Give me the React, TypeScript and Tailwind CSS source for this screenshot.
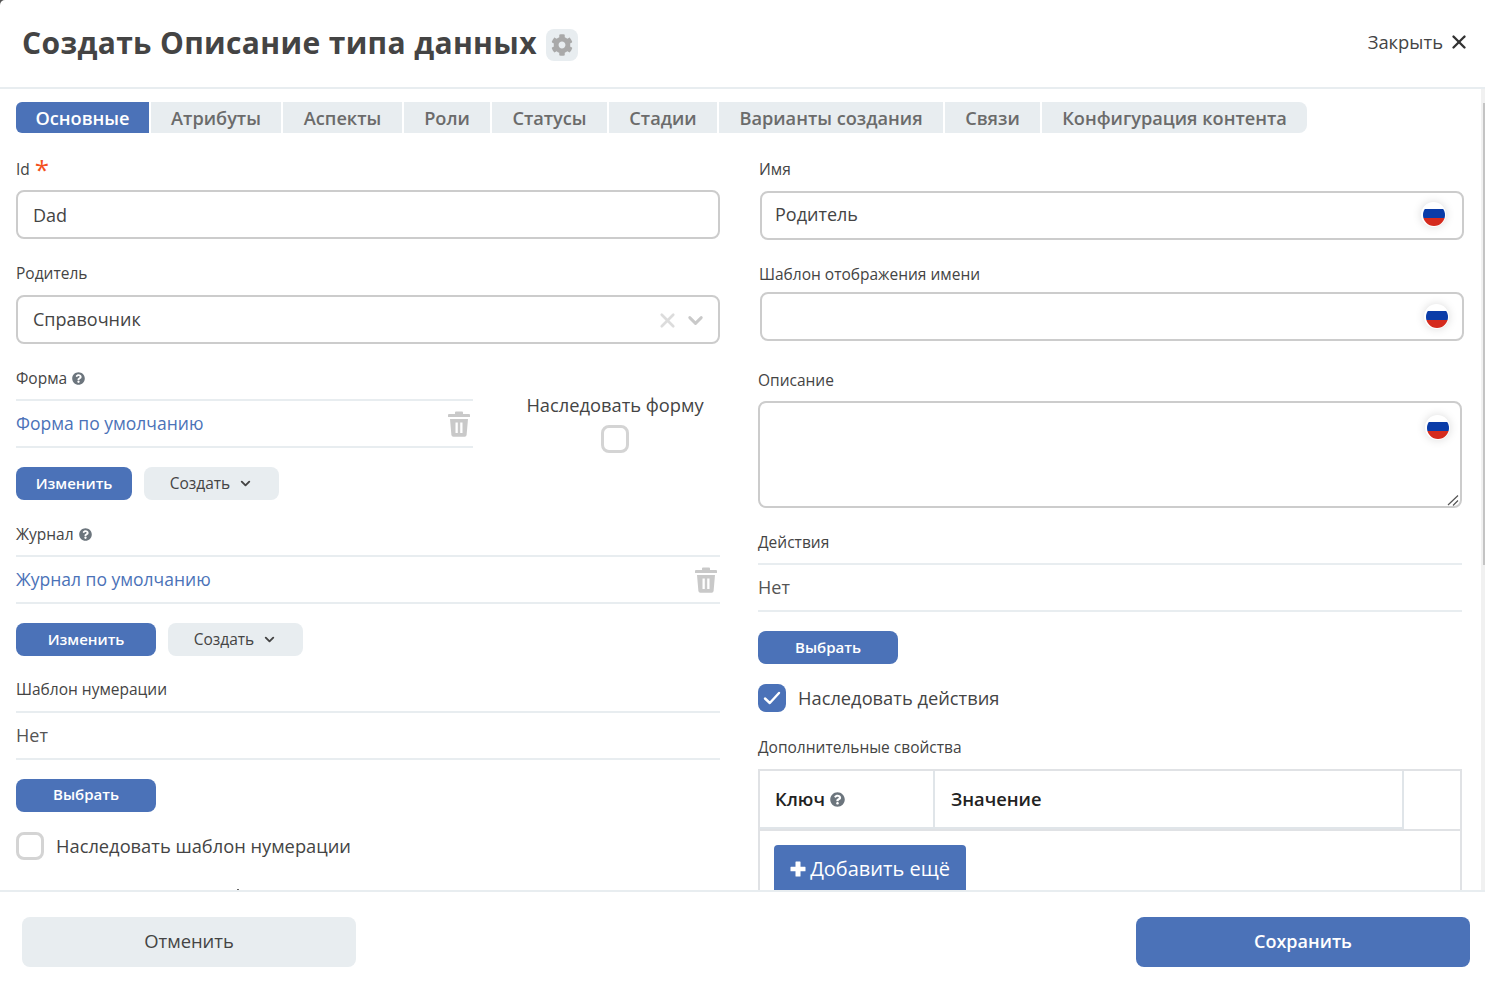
import { ChevronDown, X } from "lucide-react";
import { FaCog, FaQuestionCircle } from "react-icons/fa";

const tabs = [
  { title: "Основные", width: "w-[133px]" },
  { title: "Атрибуты", width: "w-[130px]" },
  { title: "Аспекты", width: "w-[119px]" },
  { title: "Роли", width: "w-[86px]" },
  { title: "Статусы", width: "w-[115px]" },
  { title: "Стадии", width: "w-[108px]" },
  { title: "Варианты создания", width: "w-[224px]" },
  { title: "Связи", width: "w-[95px]" },
  { title: "Конфигурация контента", width: "w-[265px]" },
];

function Label({ children, className = "" }: { children: React.ReactNode; className?: string }) {
  return (
    <div className={`flex items-center h-5 text-[15.5px] leading-5 text-[#444] ${className}`}>
      {children}
    </div>
  );
}

function Help({ size = 13 }: { size?: number }) {
  return <FaQuestionCircle size={size} className="ml-[5px] text-[#6c757d]" />;
}

function Trash() {
  return (
    <svg width="22" height="26" viewBox="0 0 22 26" className="mr-[3px] text-[#c9c9c9]" fill="currentColor">
      <path d="M8 0.5h6a1 1 0 0 1 1 1V3h6a1 1 0 0 1 1 1v1.5a.5.5 0 0 1-.5.5H.5a.5.5 0 0 1-.5-.5V4a1 1 0 0 1 1-1h6V1.5a1 1 0 0 1 1-1z" />
      <path
        fillRule="evenodd"
        d="M2 8h18l-1.4 16a2 2 0 0 1-2 1.8H5.4a2 2 0 0 1-2-1.8L2 8zm5.5 3.5v10.5h2.3V11.5H7.5zm4.7 0v10.5h2.3V11.5h-2.3z"
      />
    </svg>
  );
}

function Flag({ className = "" }: { className?: string }) {
  return (
    <span
      className={`absolute flex items-center justify-center w-[25px] h-[25px] rounded-full bg-white shadow-[0_0_10px_rgba(0,0,0,0.15)] ${className}`}
    >
      <svg width="22" height="22" viewBox="0 0 22 22">
        <clipPath id="flag">
          <circle cx="11" cy="11" r="11" />
        </clipPath>
        <g clipPath="url(#flag)">
          <rect width="22" height="5" y="0" fill="#fff" />
          <rect width="22" height="9" y="5" fill="#0a3ca8" />
          <rect width="22" height="8" y="14" fill="#d52b1e" />
        </g>
      </svg>
    </span>
  );
}

function TextField({ value = "", className = "", flagClass = "" }: { value?: string; className?: string; flagClass?: string }) {
  return (
    <div className={`relative h-[49px] rounded-lg border-2 border-[#ccc] flex items-center pl-[13px] text-lg text-[#444] ${className}`}>
      <span className="-mt-[4px]">{value}</span>
      <Flag className={flagClass} />
    </div>
  );
}

function LinkRow({ text, className = "", link = false, trash = false }: { text: string; className?: string; link?: boolean; trash?: boolean }) {
  return (
    <div
      className={`flex items-center justify-between h-[49px] border-y-2 border-[#e8edf0] ${link ? "text-[17.5px] text-[#4b72b8]" : "text-lg text-[#555] pb-[2px]"} ${className}`}
    >
      <span>{text}</span>
      {trash && <Trash />}
    </div>
  );
}

function PrimaryButton({ children, className = "" }: { children: React.ReactNode; className?: string }) {
  return (
    <button className={`h-[33px] rounded-lg bg-[#4b72b8] text-white text-[15px] font-semibold ${className}`}>
      {children}
    </button>
  );
}

function CreateButton() {
  return (
    <button className="flex items-center justify-center gap-2 w-[135px] h-[33px] rounded-lg bg-[#e8edf0] text-[15.5px] text-[#444]">
      Создать
      <ChevronDown size={15} strokeWidth={3} />
    </button>
  );
}

function Checkbox({ checked = false }: { checked?: boolean }) {
  if (checked) {
    return (
      <span className="flex items-center justify-center w-7 h-7 rounded-lg bg-[#4b72b8]">
        <svg width="18" height="14" viewBox="0 0 18 14" fill="none">
          <path d="M2 7.5 L6.8 12 L16 2" stroke="#fff" strokeWidth="2.4" strokeLinecap="round" strokeLinejoin="round" />
        </svg>
      </span>
    );
  }
  return <span className="block w-7 h-7 rounded-lg border-[3px] border-[#d4d4d4] bg-white" />;
}

export default function App() {
  return (
    <div className="h-[998px] w-[1485px] overflow-hidden bg-[#555]">
      <div className="relative flex flex-col h-full overflow-hidden rounded-tl-[5px] bg-white text-[#444] font-['Open_Sans','Noto_Sans',sans-serif]">
        {/* Header */}
        <header className="flex items-center justify-between shrink-0 h-[89px] pl-[22px] pr-[15px] border-b-2 border-[#e8edf0]">
          <div className="flex items-center">
            <h1 className="text-[30px] font-bold tracking-[0.35px] text-[#444] -mt-[2px]">Создать Описание типа данных</h1>
            <span className="flex items-center justify-center ml-[9px] mt-[2px] w-8 h-8 rounded-lg bg-[#e8edf0]">
              <FaCog size={22} className="text-[#a9a9a9]" />
            </span>
          </div>
          <div className="flex items-center gap-[5px] text-[18.4px] text-[#444] -mt-[3px]">
            Закрыть
            <X size={22} strokeWidth={2.6} className="text-[#333]" />
          </div>
        </header>

        {/* Form */}
        <main className="flex-1 min-h-0 overflow-hidden pt-[13px] pl-4">
          <nav className="flex gap-[2px]">
            {tabs.map((tab, idx) => (
              <div
                key={tab.title}
                className={`flex items-center justify-center h-[31px] pt-[2px] text-[18.2px] font-semibold ${tab.width} ${
                  idx === 0 ? "bg-[#4b72b8] text-white rounded-l-md" : "bg-[#e8edf0] text-[#6b6b6b]"
                } ${idx === tabs.length - 1 ? "rounded-r-lg" : ""}`}
              >
                {tab.title}
              </div>
            ))}
          </nav>

          <div className="grid grid-cols-[704px_704px] gap-x-[38px] mt-[26px]">
            {/* Left column */}
            <div className="flex flex-col items-stretch">
              <Label>
                Id
                <span className="ml-[5px] text-[26px] leading-5 text-[#f4511e]">*</span>
              </Label>
              <div className="mt-[11px] h-[49px] rounded-lg border-2 border-[#ccc] flex items-center pl-[15px] text-lg text-[#444]">Dad</div>

              <Label className="mt-6">Родитель</Label>
              <div className="mt-3 h-[49px] rounded-lg border-2 border-[#ccc] flex items-center pl-[15px] pr-[11px] text-lg text-[#444]">
                <span className="flex-1 -mt-[2px]">Справочник</span>
                <X size={23} strokeWidth={2.8} className="mt-[2px] text-[#dcdcdc] mr-[5px]" />
                <ChevronDown size={23} strokeWidth={3} className="mt-[2px] text-[#c9c9c9]" />
              </div>

              <div className="flex mt-6">
                <div className="w-[457px]">
                  <Label>
                    Форма
                    <Help />
                  </Label>
                  <LinkRow text="Форма по умолчанию" link trash className="mt-[11px]" />
                  <div className="flex gap-3 mt-[19px]">
                    <PrimaryButton className="w-[116px]">Изменить</PrimaryButton>
                    <CreateButton />
                  </div>
                </div>
                <div className="flex-1 ml-[37px] flex flex-col items-center pt-[25px]">
                  <span className="text-[18.3px] leading-[24px] text-[#444]">Наследовать форму</span>
                  <span className="mt-2">
                    <Checkbox />
                  </span>
                </div>
              </div>

              <Label className="mt-6">
                Журнал
                <Help />
              </Label>
              <LinkRow text="Журнал по умолчанию" link trash className="mt-[11px]" />
              <div className="flex gap-3 mt-[19px]">
                <PrimaryButton className="w-[140px]">Изменить</PrimaryButton>
                <CreateButton />
              </div>

              <Label className="mt-[23px]">Шаблон нумерации</Label>
              <LinkRow text="Нет" className="mt-3" />
              <PrimaryButton className="w-[140px] mt-[19px] pb-[2px]">Выбрать</PrimaryButton>

              <label className="flex items-center gap-3 mt-5 text-[18.3px] text-[#444]">
                <Checkbox />
                Наследовать шаблон нумерации
              </label>
            </div>

            {/* Right column */}
            <div className="flex flex-col items-stretch">
              <Label className="ml-px">Имя</Label>
              <TextField value="Родитель" className="ml-[2px] -mr-[2px] mt-3" flagClass="right-[16px] top-[9px]" />

              <Label className="mt-6 ml-px">Шаблон отображения имени</Label>
              <TextField className="ml-[2px] -mr-[2px] mt-2" flagClass="right-[13px] top-[10px]" />

              <Label className="mt-[29px]">Описание</Label>
              <div className="relative mt-[11px] h-[107px]">
                <textarea readOnly className="block w-full h-full resize-none rounded-lg border-2 border-[#ccc] outline-none" />
                <Flag className="right-[12px] top-[14px]" />
                <svg width="12" height="12" viewBox="0 0 12 12" className="absolute right-[3px] bottom-[2px]" stroke="#555" strokeWidth="1.2">
                  <path d="M1 11 L11 1.5 M6 11.5 L11 6.5" />
                </svg>
              </div>

              <Label className="mt-6">Действия</Label>
              <LinkRow text="Нет" className="mt-[11px]" />
              <PrimaryButton className="w-[140px] mt-[19px]">Выбрать</PrimaryButton>

              <label className="flex items-center gap-3 mt-5 text-[18.3px] text-[#444]">
                <Checkbox checked />
                Наследовать действия
              </label>

              <Label className="mt-[25px]">Дополнительные свойства</Label>
              <div className="mt-3 border-x-2 border-t-2 border-[#e0e2e5]">
                <div className="flex h-[60px] border-b-2 border-[#e0e2e5]">
                  <div className="flex items-center w-[175px] pl-[15px] border-r-2 border-b-[2px] border-[#e0e5e9] text-[18.3px] font-semibold text-[#222]">
                    Ключ
                    <Help size={15} />
                  </div>
                  <div className="flex items-center w-[469px] pl-[16px] border-r-2 border-b-[2px] border-[#e0e5e9] text-[18.3px] font-semibold text-[#222]">
                    Значение
                  </div>
                </div>
                <div className="pt-[14px] pl-[14px] h-[70px]">
                  <button className="flex items-center justify-center w-[192px] h-[50px] pb-[3px] rounded bg-[#4b72b8] text-white text-xl">
                    <svg width="16" height="16" viewBox="0 0 16 16" fill="currentColor" className="mr-[4px]">
                      <path d="M6 0.5h4a.5.5 0 0 1 .5.5v4.8H15a.5.5 0 0 1 .5.5v3.4a.5.5 0 0 1-.5.5h-4.5V15a.5.5 0 0 1-.5.5H6a.5.5 0 0 1-.5-.5v-4.8H1a.5.5 0 0 1-.5-.5V6.3A.5.5 0 0 1 1 5.8h4.5V1A.5.5 0 0 1 6 .5z" />
                    </svg>
                    Добавить ещё
                  </button>
                </div>
              </div>
            </div>
          </div>
        </main>

        {/* Footer */}
        <footer className="relative z-10 flex items-start justify-between shrink-0 h-[108px] pt-[25px] pl-[22px] pr-[15px] bg-white border-t-2 border-[#e8edf0]">
          <button className="w-[334px] h-[50px] pb-[2px] rounded-lg bg-[#e8edf0] text-[18.4px] text-[#444]">Отменить</button>
          <button className="w-[334px] h-[50px] pb-[2px] rounded-lg bg-[#4b72b8] text-lg font-semibold text-white">Сохранить</button>
        </footer>

        {/* scrollbar */}
        <div className="absolute right-0 top-[89px] w-1 h-[801px] bg-[#f1f1f1]">
          <div className="ml-[2px] mt-[14px] w-[2px] h-[462px] bg-[#c4c4c4]" />
        </div>
        {/* top of a clipped letter from the next field */}
        <div className="absolute z-20 left-[237px] top-[889px] w-[2px] h-px bg-[#666]" />
      </div>
    </div>
  );
}
